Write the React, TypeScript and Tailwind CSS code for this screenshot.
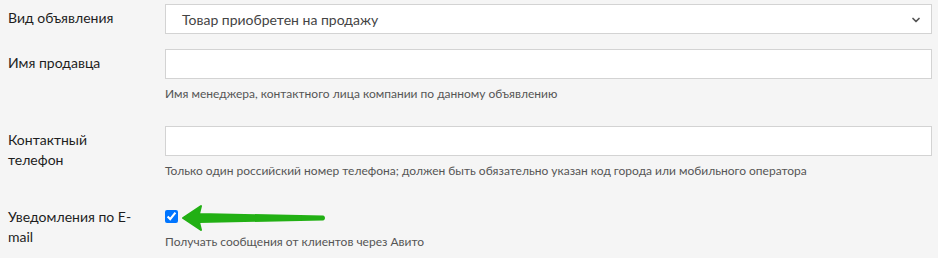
import { ChevronDown } from 'lucide-react';

const font = { fontFamily: 'Lato, "Noto Sans", sans-serif' };

function Row({ label, children }: { label: React.ReactNode; children: React.ReactNode }) {
  return (
    <div className="flex">
      <label className="w-[165px] shrink-0 pl-2 pr-4 pt-1 text-[14px] leading-5 text-[#1e1e1e]">{label}</label>
      <div className="flex-1 pr-[6px]">{children}</div>
    </div>
  );
}

function Help({ children }: { children: React.ReactNode }) {
  return <p className="mt-[6px] text-[12px] leading-[17px] text-[#555]">{children}</p>;
}

export default function App() {
  return (
    <div className="min-h-[258px] w-[938px] bg-[#f5f5f5] pt-1" style={font}>
      <div className="flex flex-col">
        <Row label="Вид объявления">
          <div className="relative flex h-[30px] items-center border border-[#d3d3d3] bg-white pl-4 text-[14px] text-[#444]">
            Товар приобретен на продажу
            <ChevronDown className="absolute right-[9px] top-[9px] h-[12px] w-[12px] text-[#555]" strokeWidth={3.5} />
          </div>
        </Row>

        <div className="h-[15px]" />

        <Row label="Имя продавца">
          <div className="h-[30px] border border-[#d3d3d3] bg-white" />
          <Help>Имя менеджера, контактного лица компании по данному объявлению</Help>
        </Row>

        <div className="h-[24px]" />

        <Row label={<>Контактный<br />телефон</>}>
          <div className="h-[30px] border border-[#d3d3d3] bg-white" />
          <Help>Только один российский номер телефона; должен быть обязательно указан код города или мобильного оператора</Help>
        </Row>

        <div className="h-[24px]" />

        <Row label={<>Уведомления по E-<br />mail</>}>
          <div className="relative h-[24px] pt-[7px]">
            <input type="checkbox" defaultChecked className="m-0 block h-[13px] w-[13px] accent-[#0075ff]" />
            <svg className="absolute left-[16px] top-[-2px]" width="148" height="34" viewBox="0 0 148 34">
              <path
                d="M2 17 L20 5 L18 13 L142 15.5 A1.6 1.6 0 0 1 142 18.5 L18 21 L20 29 Z"
                fill="#22b014"
                stroke="#22b014"
                strokeWidth="2"
                strokeLinejoin="round"
              />
            </svg>
          </div>
          <Help>Получать сообщения от клиентов через Авито</Help>
        </Row>
      </div>
    </div>
  );
}
